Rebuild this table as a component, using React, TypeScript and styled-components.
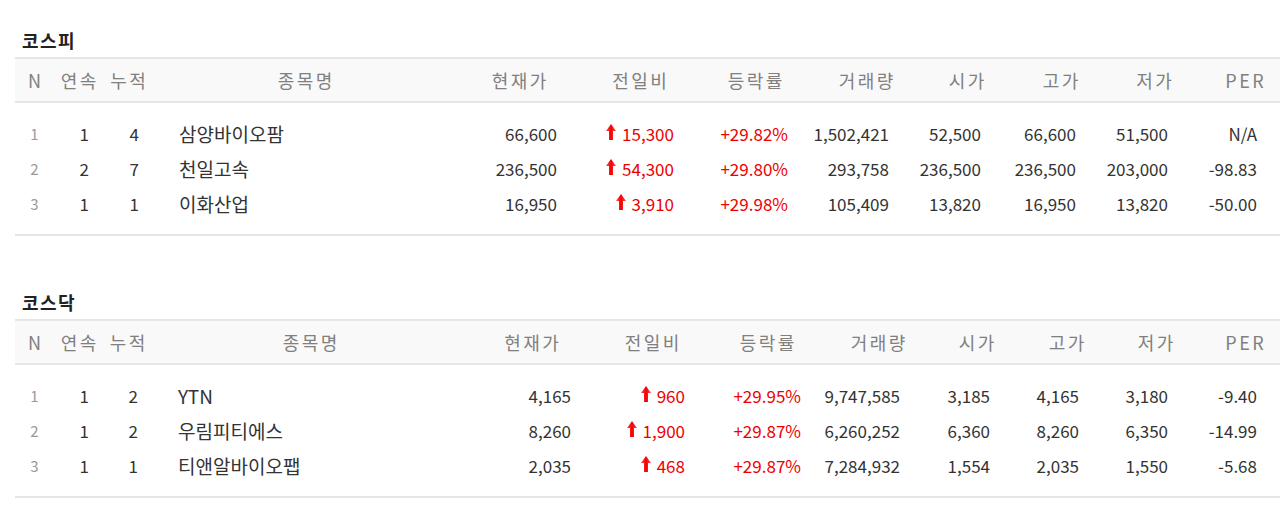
import React from "react";
import styled, { createGlobalStyle } from "styled-components";

type Stock = {
  n: number;
  streak: number;
  total: number;
  name: string;
  price: string;
  change: string;
  rate: string;
  volume: string;
  open: string;
  high: string;
  low: string;
  per: string;
};

type Market = {
  title: string;
  cols: string; // grid column widths for this table
  rows: Stock[];
};

const markets: Market[] = [
  {
    title: "코스피",
    cols: "39px 49px 50px 304px 124px 117px 114px 108px 93px 95px 92px 89px",
    rows: [
      { n: 1, streak: 1, total: 4, name: "삼양바이오팜", price: "66,600", change: "15,300", rate: "+29.82%", volume: "1,502,421", open: "52,500", high: "66,600", low: "51,500", per: "N/A" },
      { n: 2, streak: 2, total: 7, name: "천일고속", price: "236,500", change: "54,300", rate: "+29.80%", volume: "293,758", open: "236,500", high: "236,500", low: "203,000", per: "-98.83" },
      { n: 3, streak: 1, total: 1, name: "이화산업", price: "16,950", change: "3,910", rate: "+29.98%", volume: "105,409", open: "13,820", high: "16,950", low: "13,820", per: "-50.00" },
    ],
  },
  {
    title: "코스닥",
    cols: "39px 49px 49px 316px 127px 114px 116px 106px 91px 89px 89px 89px",
    rows: [
      { n: 1, streak: 1, total: 2, name: "YTN", price: "4,165", change: "960", rate: "+29.95%", volume: "9,747,585", open: "3,185", high: "4,165", low: "3,180", per: "-9.40" },
      { n: 2, streak: 1, total: 2, name: "우림피티에스", price: "8,260", change: "1,900", rate: "+29.87%", volume: "6,260,252", open: "6,360", high: "8,260", low: "6,350", per: "-14.99" },
      { n: 3, streak: 1, total: 1, name: "티앤알바이오팹", price: "2,035", change: "468", rate: "+29.87%", volume: "7,284,932", open: "1,554", high: "2,035", low: "1,550", per: "-5.68" },
    ],
  },
];

const headers = ["N", "연속", "누적", "종목명", "현재가", "전일비", "등락률", "거래량", "시가", "고가", "저가", "PER"];

export default function App() {
  return (
    <>
      <GlobalStyle />
      <Page>
        {markets.map((m) => (
          <Section key={m.title}>
            <Title>{m.title}</Title>
            <HeadRow $cols={m.cols}>
              {headers.map((h) => (
                <HeadCell key={h}>{h}</HeadCell>
              ))}
            </HeadRow>
            <Body>
              {m.rows.map((r) => (
                <Row key={r.n} $cols={m.cols}>
                  <RankCell>{r.n}</RankCell>
                  <NumCell $pr={14}>{r.streak}</NumCell>
                  <NumCell $pr={14}>{r.total}</NumCell>
                  <NameCell>{r.name}</NameCell>
                  <NumCell $pr={24}>{r.price}</NumCell>
                  <NumCell $pr={24} $red>
                    <UpArrow />
                    {r.change}
                  </NumCell>
                  <NumCell $pr={24} $red>{r.rate}</NumCell>
                  <NumCell $pr={31}>{r.volume}</NumCell>
                  <NumCell $pr={32}>{r.open}</NumCell>
                  <NumCell $pr={32}>{r.high}</NumCell>
                  <NumCell $pr={32}>{r.low}</NumCell>
                  <NumCell $pr={32}>{r.per}</NumCell>
                </Row>
              ))}
            </Body>
          </Section>
        ))}
      </Page>
    </>
  );
}

// 빨간 상승 화살표
function UpArrow() {
  return (
    <ArrowSvg width="10" height="16" viewBox="0 0 10 16" aria-hidden="true">
      <defs>
        <linearGradient id="upg" x1="0" x2="1" y1="0" y2="0">
          <stop offset="0" stopColor="#ff5050" />
          <stop offset="0.5" stopColor="#f00000" />
          <stop offset="1" stopColor="#ff5050" />
        </linearGradient>
      </defs>
      <path d="M5 0 L10 7 L7 7 L7 16 L3 16 L3 7 L0 7 Z" fill="url(#upg)" />
    </ArrowSvg>
  );
}

// ===== styled =====

const GlobalStyle = createGlobalStyle`
  html, body {
    margin: 0;
    background: #fff;
    overflow: hidden;
  }
  body {
    font-family: "Noto Sans CJK KR", "Noto Sans", sans-serif;
    color: #333;
  }
`;

const Page = styled.main`
  display: flex;
  flex-direction: column;
  gap: 54px;
  padding: 28px 0 0 15px;
  width: 1274px;
`;

const Section = styled.section`
  display: flex;
  flex-direction: column;
`;

const Title = styled.h2`
  margin: 0 0 5px;
  padding-left: 7px;
  font-size: 18px;
  line-height: 24px;
  letter-spacing: 1.5px;
  font-weight: 700;
  color: #222;
`;

const HeadRow = styled.div<{ $cols: string }>`
  display: grid;
  grid-template-columns: ${(p) => p.$cols};
  height: 42px;
  align-items: center;
  background: #f9f9f9;
  border-top: 2px solid #e6e6e6;
  border-bottom: 2px solid #e6e6e6;
`;

const HeadCell = styled.div`
  text-align: center;
  font-size: 18px;
  letter-spacing: 2.5px;
  text-indent: 2.5px;
  color: #808080;
  white-space: nowrap;
`;

const Body = styled.div`
  padding: 13px 0;
  border-bottom: 2px solid #e6e6e6;
`;

const Row = styled.div<{ $cols: string }>`
  display: grid;
  grid-template-columns: ${(p) => p.$cols};
  height: 35px;
  align-items: center;
  font-size: 17px;
`;

const RankCell = styled.div`
  text-align: center;
  font-size: 15px;
  color: #9a9a9a;
`;

const NumCell = styled.div<{ $pr: number; $red?: boolean }>`
  display: flex;
  justify-content: flex-end;
  align-items: center;
  gap: 6px;
  padding-right: ${(p) => p.$pr}px;
  color: ${(p) => (p.$red ? "#ee0000" : "#333")};
  white-space: nowrap;
`;

const NameCell = styled.div`
  padding-left: 26px;
  font-size: 19px;
  color: #333;
  white-space: nowrap;
`;

const ArrowSvg = styled.svg`
  display: block;
  margin-top: -3px;
`;
